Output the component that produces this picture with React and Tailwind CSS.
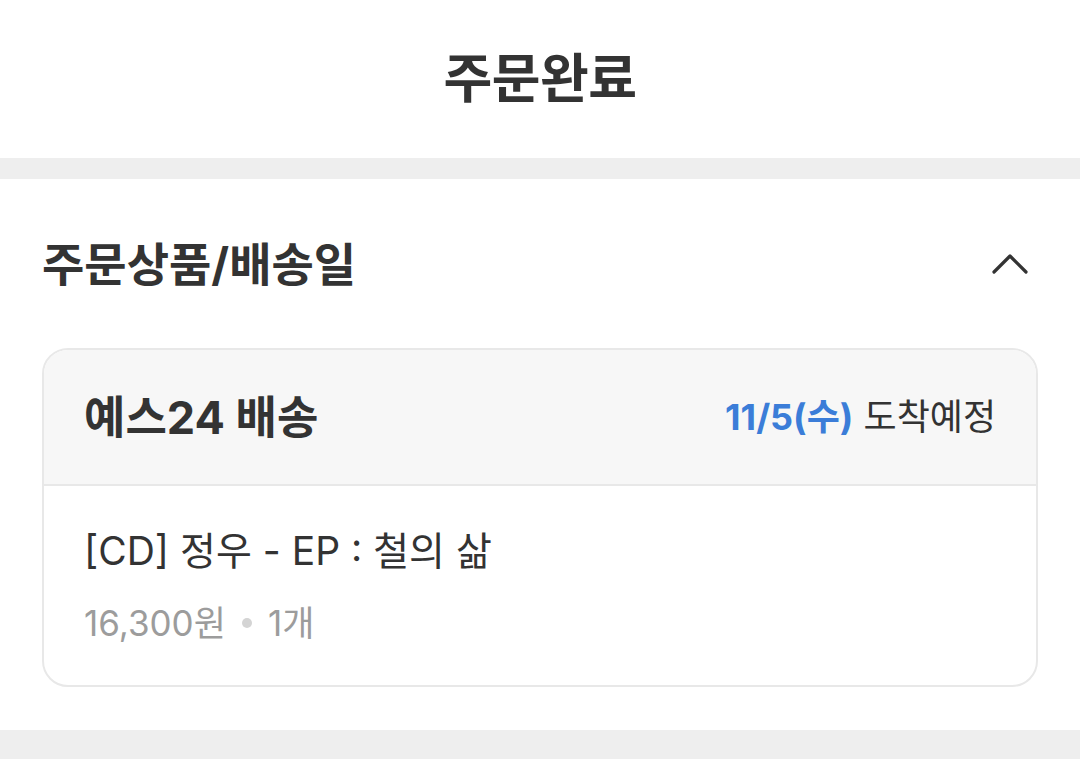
export default function App() {
  return (
    <div
      className="min-h-[759px] bg-white text-[#333333]"
      style={{ fontFamily: 'Inter, "Noto Sans CJK KR", "Noto Sans", sans-serif' }}
    >
      {/* Top bar */}
      <header className="h-[158px] flex items-center justify-center">
        <h1 className="text-[53px] font-bold leading-none tracking-[-0.5px]">주문완료</h1>
      </header>

      <div className="h-[21px] bg-[#eeeeee]" />

      {/* Order items section */}
      <section className="px-[42px] pb-[43px]">
        <div className="h-[169px] flex items-center justify-between">
          <h2 className="text-[46px] font-bold leading-none">주문상품/배송일</h2>
          <svg width="36" height="22" viewBox="0 0 36 22" className="mr-[10px]" fill="none">
            <path
              d="M2 19 L18 3 L34 19"
              stroke="#333333"
              strokeWidth="3.2"
              strokeLinecap="round"
              strokeLinejoin="round"
            />
          </svg>
        </div>

        <div className="rounded-[26px] border-2 border-[#e8e8e8] overflow-hidden">
          <div className="h-[136px] bg-[#f7f7f7] border-b-2 border-[#e8e8e8] flex items-center justify-between px-[40px]">
            <span className="text-[45px] font-bold leading-none">예스24 배송</span>
            <span className="text-[36px] leading-none">
              <span className="font-bold text-[#3b7dd8]">11/5(수)</span> 도착예정
            </span>
          </div>
          <div className="px-[40px] pt-[41px] pb-[40px]">
            <p className="text-[39px] leading-[48px]">[CD] 정우 - EP : 철의 삶</p>
            <p className="mt-[26px] text-[35px] leading-[44px] text-[#9c9c9c] flex items-center">
              16,300원
              <span className="mx-[16px] w-[10px] h-[10px] rounded-full bg-[#d4d4d4]" />
              1개
            </p>
          </div>
        </div>
      </section>

      <div className="h-[40px] bg-[#eeeeee]" />
    </div>
  );
}
